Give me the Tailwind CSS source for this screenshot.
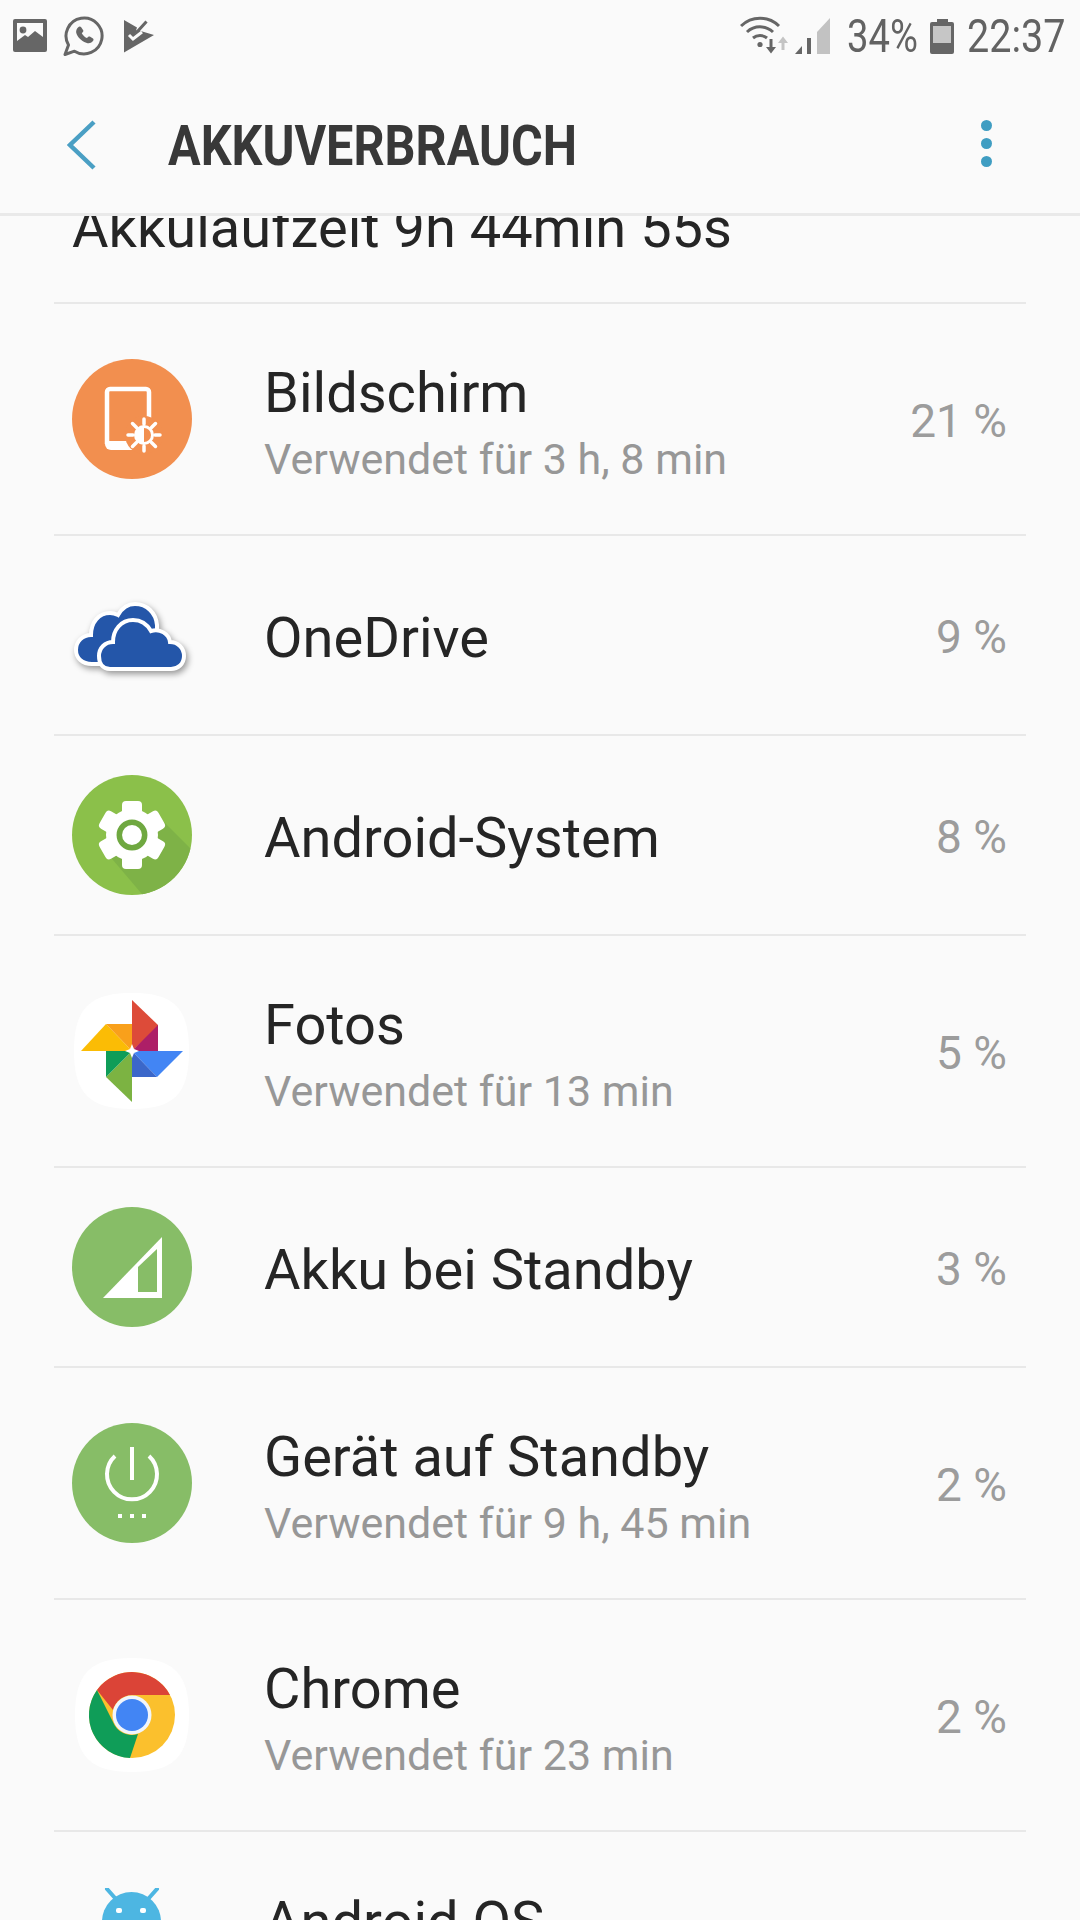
<!DOCTYPE html>
<html lang="de">
<head>
  <meta charset="UTF-8" />
  <meta name="viewport" content="width=device-width, initial-scale=1" />
  <title>Akkuverbrauch</title>
  <script src="https://cdn.jsdelivr.net/npm/@tailwindcss/browser@4"></script>
</head>
<body class="bg-[#fafafa] [font-family:Roboto,sans-serif] text-[#252525]">
  <div class="w-[1080px] h-[1920px] overflow-hidden flex flex-col">

    <!-- Header -->
    <header class="h-[216px] shrink-0 border-b-[3px] border-[#e9e9e9] bg-[#fafafa] relative z-10">
      <!-- Status bar -->
      <div class="h-[72px] flex items-center pl-[12px] pr-[17px]">
        <svg class="w-[144px] h-[40px] shrink-0" viewBox="12 16 144 40">
          <g transform="translate(1 0)">
            <path fill="#666" d="M14 19h30a2 2 0 0 1 2 2v29a2 2 0 0 1-2 2H14a2 2 0 0 1-2-2V21a2 2 0 0 1 2-2z"/>
            <path fill="#fafafa" d="M16 23h26v14l-8-6-7 6-3-2-8 6z"/>
            <circle cx="22" cy="30" r="3.400" fill="#666"/>
          </g>
          <path fill="none" stroke="#666" stroke-width="3" stroke-linejoin="round" d="M65 54.500L68.500 45A18 18 0 1 1 74.500 51.200Z"/>
          <path fill="#666" transform="translate(3 0)" d="M75 27.500c1-1 2-1.500 3-.5l2.200 3.200c.5 1 0 1.600-1.400 3 1.200 2.200 2.800 3.800 5 4.800 1.400-1.400 2-1.900 3-1.400l3.200 2c1 .8.500 2-.5 3-1.600 1.600-3.700 2.200-6.300 1.100-5.200-2.100-8.900-5.800-10-10-.3-2.100.5-3.800 1.800-5.200z"/>
          <g transform="translate(4 0)">
            <path fill="#666" d="M120 20l13 7.500-2 6 4-3 15 4.500-30 17.500z"/>
            <path fill="none" stroke="#666" stroke-width="3" d="M129 29l3.500 3.500 10-11"/>
            <path fill="none" stroke="#fafafa" stroke-width="3" d="M125 35l4 4 9-7"/>
          </g>
        </svg>
        <div class="flex-1"></div>
        <svg class="w-[92px] h-[40px] shrink-0" viewBox="742 15 92 40">
          <g fill="none" stroke="#666" stroke-width="3">
            <path d="M743 25a27 27 0 0 1 38 0"/>
            <path d="M749 31a19 19 0 0 1 26 0"/>
            <path d="M755 37a11 11 0 0 1 14 0"/>
          </g>
          <circle cx="762" cy="43.500" r="2.600" fill="#666"/>
          <path fill="#666" d="M771.500 38h3v8h3.500l-5 6.500-5-6.500h3.500z"/>
          <path fill="#c4c4c4" d="M783.500 49v-7h-3.500l5-6.500 5 6.500h-3.500v7z"/>
          <path fill="#666" d="M797 53l7-8v8zM809 37h4v16h-4z"/>
          <path fill="#c2c2c2" d="M819 31l13-14v36h-13z"/>
        </svg>
        <span class="ml-[15px] text-[46px] leading-none text-[#636363] w-[70px] inline-block origin-left scale-x-[0.83] whitespace-nowrap">34%</span>
        <svg class="ml-[13px] w-[24px] h-[35px] shrink-0" viewBox="0 0 24 35">
          <path fill="#666" d="M7 0h11v3h4a2 2 0 0 1 2 2v28a2 2 0 0 1-2 2H2a2 2 0 0 1-2-2V5a2 2 0 0 1 2-2h5z"/>
          <rect x="3" y="7" width="18" height="17" fill="#c6c6c6"/>
        </svg>
        <span class="ml-[13px] text-[46px] leading-none text-[#636363] w-[96px] inline-block origin-left scale-x-[0.86] whitespace-nowrap">22:37</span>
      </div>
      <!-- Title row -->
      <div class="h-[141px] pt-[5px] flex items-center relative">
        <svg class="ml-[67px] w-[30px] h-[50px] shrink-0" viewBox="0 0 30 50">
          <path fill="none" stroke="#4a9fc4" stroke-width="4.500" d="M27 2L3 25l24 23"/>
        </svg>
        <h1 class="ml-[71px] mt-[2px] text-[55px] leading-none font-bold text-[#383838] origin-left scale-x-[0.883] whitespace-nowrap">AKKUVERBRAUCH</h1>
        <div class="absolute left-[981px] top-[48px] flex flex-col gap-[7px]">
          <span class="w-[11px] h-[11px] rounded-full bg-[#3f9dc2]"></span>
          <span class="w-[11px] h-[11px] rounded-full bg-[#3f9dc2]"></span>
          <span class="w-[11px] h-[11px] rounded-full bg-[#3f9dc2]"></span>
        </div>
      </div>
    </header>

    <main class="flex-1 overflow-hidden">
      <!-- Laufzeit, scrolled under the header -->
      <div class="mx-[54px] h-[88px] border-b-2 border-[#e8e8e8] flex items-end pb-[46px]">
        <p class="ml-[18px] text-[56px] leading-none whitespace-nowrap">Akkulaufzeit 9h 44min 55s</p>
      </div>

      <!-- Bildschirm -->
      <div class="mx-[54px] h-[232px] border-b-2 border-[#e8e8e8] flex items-center">
        <svg class="ml-[18px] w-[120px] h-[120px] shrink-0" viewBox="0 0 120 120">
          <circle cx="60" cy="60" r="60" fill="#f28f4f"/>
          <path fill="none" stroke="#fff" stroke-width="4.500" d="M77 60V33a3 3 0 0 0-3-3H38a3 3 0 0 0-3 3v52"/>
          <path fill="#fff" d="M33 82h28l4 9H39a6 6 0 0 1-6-6z"/>
          <circle cx="72" cy="76" r="19" fill="#f28f4f"/>
          <g stroke="#fff" stroke-width="3.500" stroke-linecap="round">
            <path d="M72 60v5M72 87v5M56 76h5M83 76h5M60.500 64.500l4 4M79.500 83.500l4 4M60.500 87.500l4-4M79.500 68.500l4-4"/>
          </g>
          <circle cx="72" cy="76" r="10" fill="#fff"/>
          <path fill="#f28f4f" d="M72 69a7 7 0 0 1 0 14z"/>
        </svg>
        <div class="ml-[72px] flex-1">
          <p class="text-[56px] leading-[79px]">Bildschirm</p>
          <p class="text-[43px] leading-[52px] text-[#979797]">Verwendet für 3 h, 8 min</p>
        </div>
        <span class="mr-[19px] pt-[4px] text-[46px] text-[#9c9c9c]">21 %</span>
      </div>

      <!-- OneDrive -->
      <div class="mx-[54px] h-[200px] border-b-2 border-[#e8e8e8] flex items-center">
        <svg class="ml-[18px] w-[120px] h-[120px] shrink-0 drop-shadow-[2px_3px_3px_rgba(0,0,0,0.4)]" viewBox="0 0 120 120">
          <path fill="#2456a9" stroke="#fff" stroke-width="4" d="M20 89C10 89 4 83 4 75 4 66 11 60 19 60 19 47 27 38 38 38 41 38 44 39 46 40 50 33 56 29 63 29 75 29 84 38 85 50L85 89Z"/>
          <path fill="#2456a9" stroke="#fff" stroke-width="4" d="M38 94C30 94 27 88 27 81 27 73 33 67 41 67 41 55 49 45 61 45 69 45 75 49 79 56 88 53 97 59 98 67 106 67 112 73 112 81 112 89 106 94 99 94Z"/>
        </svg>
        <div class="ml-[72px] flex-1 pt-[6px]">
          <p class="text-[56px] leading-[66px]">OneDrive</p>
        </div>
        <span class="mr-[19px] pt-[4px] text-[46px] text-[#9c9c9c]">9 %</span>
      </div>

      <!-- Android-System -->
      <div class="mx-[54px] h-[200px] border-b-2 border-[#e8e8e8] flex items-center">
        <svg class="ml-[18px] w-[120px] h-[120px] shrink-0" viewBox="0 0 120 120">
          <clipPath id="gearClip"><circle cx="60" cy="60" r="60"/></clipPath>
          <circle cx="60" cy="60" r="60" fill="#8bc04a"/>
          <path clip-path="url(#gearClip)" fill="#7eb247" d="M35 78L75 125 130 85 90 45z"/>
          <g fill="#fff" transform="translate(60 60)">
            <circle r="26"/>
            <rect x="-10" y="-34" width="20" height="16" rx="4"/>
            <rect x="-10" y="-34" width="20" height="16" rx="4" transform="rotate(60)"/>
            <rect x="-10" y="-34" width="20" height="16" rx="4" transform="rotate(120)"/>
            <rect x="-10" y="-34" width="20" height="16" rx="4" transform="rotate(180)"/>
            <rect x="-10" y="-34" width="20" height="16" rx="4" transform="rotate(240)"/>
            <rect x="-10" y="-34" width="20" height="16" rx="4" transform="rotate(300)"/>
          </g>
          <circle cx="60" cy="60" r="12.700" fill="none" stroke="#6fa840" stroke-width="5.500"/>
        </svg>
        <div class="ml-[72px] flex-1 pt-[6px]">
          <p class="text-[56px] leading-[66px]">Android-System</p>
        </div>
        <span class="mr-[19px] pt-[4px] text-[46px] text-[#9c9c9c]">8 %</span>
      </div>

      <!-- Fotos -->
      <div class="mx-[54px] h-[232px] border-b-2 border-[#e8e8e8] flex items-center">
        <svg class="ml-[18px] w-[120px] h-[120px] shrink-0" viewBox="0 0 120 120">
          <path fill="#fff" d="M60 2c42 0 57 15 57 58s-15 58-57 58S2 103 2 60 18 2 60 2z"/>
          <path fill="#dd4b39" d="M60 9l26 25v2L60 60z"/>
          <path fill="#ad1f67" d="M86 34v26H60z"/>
          <path fill="#4285f4" d="M60 60h51L85 86z"/>
          <path fill="#3b67c9" d="M60 60l25 26H60z"/>
          <path fill="#7cb342" d="M60 60v51L34 86z"/>
          <path fill="#0f9d58" d="M34 60h26L34 86z"/>
          <path fill="#fbbc05" d="M9 60l25-27 26 27z"/>
          <path fill="#f9a01b" d="M34 33h26v27z"/>
          <path fill="#fff" d="M60 53l2 5 5 2-5 2-2 5-2-5-5-2 5-2z"/>
        </svg>
        <div class="ml-[72px] flex-1">
          <p class="text-[56px] leading-[79px]">Fotos</p>
          <p class="text-[43px] leading-[52px] text-[#979797]">Verwendet für 13 min</p>
        </div>
        <span class="mr-[19px] pt-[4px] text-[46px] text-[#9c9c9c]">5 %</span>
      </div>

      <!-- Akku bei Standby -->
      <div class="mx-[54px] h-[200px] border-b-2 border-[#e8e8e8] flex items-center">
        <svg class="ml-[18px] w-[120px] h-[120px] shrink-0" viewBox="0 0 120 120">
          <circle cx="60" cy="60" r="60" fill="#87bd67"/>
          <path fill="#fff" d="M31 91L90 30v61z"/>
          <path fill="#87bd67" d="M66 85V60l19-18v43z"/>
        </svg>
        <div class="ml-[72px] flex-1 pt-[6px]">
          <p class="text-[56px] leading-[66px]">Akku bei Standby</p>
        </div>
        <span class="mr-[19px] pt-[4px] text-[46px] text-[#9c9c9c]">3 %</span>
      </div>

      <!-- Gerät auf Standby -->
      <div class="mx-[54px] h-[232px] border-b-2 border-[#e8e8e8] flex items-center">
        <svg class="ml-[18px] w-[120px] h-[120px] shrink-0" viewBox="0 0 120 120">
          <circle cx="60" cy="60" r="60" fill="#87bd67"/>
          <path fill="none" stroke="#fff" stroke-width="4" d="M43 33a25 25 0 1 0 34 0M60 24v33"/>
          <path fill="#fff" d="M46 91h4v4h-4zM58 91h4v4h-4zM70 91h4v4h-4z"/>
        </svg>
        <div class="ml-[72px] flex-1">
          <p class="text-[56px] leading-[79px]">Gerät auf Standby</p>
          <p class="text-[43px] leading-[52px] text-[#979797]">Verwendet für 9 h, 45 min</p>
        </div>
        <span class="mr-[19px] pt-[4px] text-[46px] text-[#9c9c9c]">2 %</span>
      </div>

      <!-- Chrome -->
      <div class="mx-[54px] h-[232px] border-b-2 border-[#e8e8e8] flex items-center">
        <svg class="ml-[18px] w-[120px] h-[120px] shrink-0" viewBox="0 0 120 120">
          <path fill="#fff" d="M60 3c41 0 57 15 57 57s-16 57-57 57S3 102 3 60 19 3 60 3z"/>
          <circle cx="60" cy="60" r="43" fill="#fbc02d"/>
          <path fill="#db4437" d="M25 35A43 43 0 0 1 98 40H60a20 20 0 0 0-19 15z"/>
          <path fill="#0f9d58" d="M25 35L41 67a20 20 0 0 0 25 12l-8 24A43 43 0 0 1 25 35z"/>
          <circle cx="60" cy="60" r="19.500" fill="#f1f5fb"/>
          <circle cx="60" cy="60" r="16" fill="#4285f4"/>
        </svg>
        <div class="ml-[72px] flex-1">
          <p class="text-[56px] leading-[79px]">Chrome</p>
          <p class="text-[43px] leading-[52px] text-[#979797]">Verwendet für 23 min</p>
        </div>
        <span class="mr-[19px] pt-[4px] text-[46px] text-[#9c9c9c]">2 %</span>
      </div>

      <!-- Android OS, cut off by the bottom edge -->
      <div class="mx-[54px] h-[232px] flex items-center">
        <svg class="ml-[18px] w-[120px] h-[120px] shrink-0" viewBox="0 0 120 120">
          <path fill="none" stroke="#4db6e2" stroke-width="4" stroke-linecap="round" d="M35 1l8 9M85 1l-8 9"/>
          <path fill="#4db6e2" d="M30 33.500a29.500 29.500 0 0 1 59 0v87H30z"/>
          <rect x="44" y="20" width="6" height="5" rx="2" fill="#fff"/>
          <rect x="68" y="20" width="6" height="5" rx="2" fill="#fff"/>
        </svg>
        <div class="ml-[72px] flex-1">
          <p class="text-[56px] leading-[79px]">Android OS</p>
          <p class="text-[43px] leading-[52px]">&nbsp;</p>
        </div>
      </div>
    </main>
  </div>
</body>
</html>
